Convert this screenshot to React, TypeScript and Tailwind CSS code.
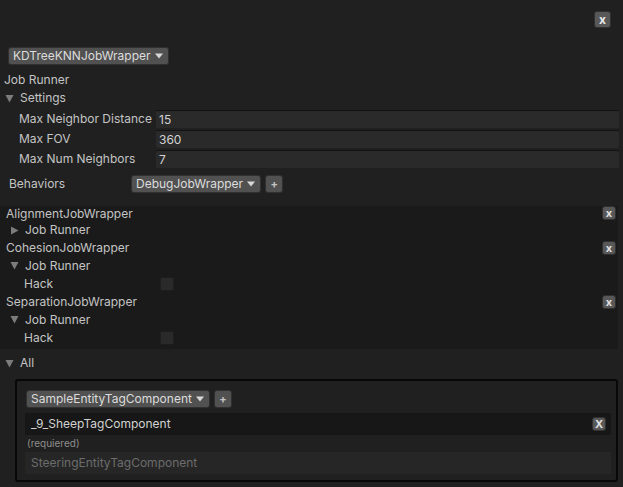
import type { ReactNode } from "react";

const font = { fontFamily: "Inter, 'Noto Sans', sans-serif" };

function Caret({ open }: { open: boolean }) {
  return (
    <svg width="9" height="9" viewBox="0 0 9 9" className="shrink-0">
      {open ? (
        <path d="M0.5 1 H8.5 L4.5 8.5 Z" fill="#7c7c7c" />
      ) : (
        <path d="M1 0.5 V8.5 L8.5 4.5 Z" fill="#7c7c7c" />
      )}
    </svg>
  );
}

function DropArrow() {
  return (
    <svg width="8" height="6" viewBox="0 0 8 6" className="shrink-0 ml-[4px]">
      <path d="M0 0.5 H8 L4 5.5 Z" fill="#d8d8d8" />
    </svg>
  );
}

function Dropdown({ label }: { label: string }) {
  return (
    <div className="h-[18px] flex items-center rounded-[3px] bg-[#515151] border border-[#303030] pl-[4px] pr-[5px] text-[12px] text-[#dcdcdc]">
      {label}
      <DropArrow />
    </div>
  );
}

function PlusButton() {
  return (
    <div className="w-[18px] h-[18px] flex items-center justify-center rounded-[3px] bg-[#515151] border border-[#303030] text-[11px] font-bold text-[#c4c4c4] leading-none">
      +
    </div>
  );
}

function XButton({ size = "sm", label = "x" }: { size?: "sm" | "lg"; label?: string }) {
  return (
    <div
      className={
        size === "lg"
          ? "w-[17px] h-[17px] flex items-center justify-center rounded-[3px] bg-[#585858] border border-[#303030] text-[12px] font-bold text-[#e8e8e8] leading-none"
          : "w-[14px] h-[14px] flex items-center justify-center rounded-[3px] bg-[#585858] border border-[#303030] text-[11px] font-bold text-[#e0e0e0] leading-none"
      }
    >
      {label}
    </div>
  );
}

function FieldRow({ label, value }: { label: string; value: string }) {
  return (
    <div className="h-[20px] flex items-center">
      <div className="w-[156px] pl-[19px] text-[12px] text-[#c4c4c4]">{label}</div>
      <div className="flex-1 h-[18px] mr-[4px] bg-[#2a2a2a] border-t border-[#121212] rounded-[2px] flex items-center pl-[3px] text-[12px] text-[#d2d2d2]">
        {value}
      </div>
    </div>
  );
}

function Row({ h, children }: { h: string; children: ReactNode }) {
  return <div className={`${h} flex items-center`}>{children}</div>;
}

function Hack() {
  return (
    <div className="h-[19px] flex items-center">
      <div className="w-[160px] pl-[24px] text-[12px] text-[#c4c4c4]">Hack</div>
      <div className="w-[14px] h-[14px] rounded-[2px] bg-[#2a2a2a] border border-[#1e1e1e]" />
    </div>
  );
}

export default function App() {
  return (
    <div style={font} className="w-[623px] h-[487px] bg-[#202020] overflow-hidden">
      <div className="flex justify-end pt-[11px] pr-[12px]">
        <XButton size="lg" />
      </div>

      <div className="flex pl-[8px] mt-[19px]">
        <Dropdown label="KDTreeKNNJobWrapper" />
      </div>

      <div className="h-[18px] mt-[6px] flex items-center pl-[4px] text-[12px] text-[#c4c4c4]">Job Runner</div>
      <div className="h-[18px] flex items-center gap-[6px] pl-[5px] text-[12px] text-[#c4c4c4]">
        <Caret open />
        Settings
      </div>

      <div className="mt-[2px]">
        <FieldRow label="Max Neighbor Distance" value="15" />
        <FieldRow label="Max FOV" value="360" />
        <FieldRow label="Max Num Neighbors" value="7" />
      </div>

      <div className="h-[18px] mt-[6px] flex items-center">
        <div className="w-[131px] pl-[9px] text-[12px] text-[#c4c4c4]">Behaviors</div>
        <Dropdown label="DebugJobWrapper" />
        <div className="ml-[4px]">
          <PlusButton />
        </div>
      </div>

      <div className="mt-[13px] w-[618px] h-[143px] bg-[#1a1a1a] text-[12px] text-[#c4c4c4]">
        <Row h="h-[15px]">
          <div className="flex-1 pl-[6px]">AlignmentJobWrapper</div>
          <div className="mr-[2px] self-start">
            <XButton />
          </div>
        </Row>
        <Row h="h-[18px]">
          <div className="flex items-center gap-[6px] pl-[10px]">
            <Caret open={false} />
            Job Runner
          </div>
        </Row>
        <Row h="h-[18px]">
          <div className="flex-1 pl-[6px]">CohesionJobWrapper</div>
          <div className="mr-[2px]">
            <XButton />
          </div>
        </Row>
        <Row h="h-[17px]">
          <div className="flex items-center gap-[6px] pl-[10px]">
            <Caret open />
            Job Runner
          </div>
        </Row>
        <Hack />
        <Row h="h-[18px]">
          <div className="flex-1 pl-[6px]">SeparationJobWrapper</div>
          <div className="mr-[2px]">
            <XButton />
          </div>
        </Row>
        <Row h="h-[17px]">
          <div className="flex items-center gap-[6px] pl-[10px]">
            <Caret open />
            Job Runner
          </div>
        </Row>
        <Hack />
      </div>

      <div className="h-[18px] mt-[5px] flex items-center gap-[6px] pl-[5px] text-[12px] text-[#c4c4c4]">
        <Caret open />
        All
      </div>

      <div className="mt-[7px] ml-[15px] w-[603px] h-[103px] border-2 border-[#080808] rounded-[3px] pt-[9px] pl-[8px] pr-[5px]">
        <div className="flex items-center gap-[4px] pl-[1px]">
          <Dropdown label="SampleEntityTagComponent" />
          <PlusButton />
        </div>
        <div className="mt-[5px] h-[22px] bg-[#171717] flex items-center justify-between pl-[6px] pr-[5px] text-[12px] text-[#d2d2d2]">
          _9_SheepTagComponent
          <XButton label="X" />
        </div>
        <div className="h-[17px] flex items-center pl-[2px] text-[10px] text-[#8e8e8e]">(requiered)</div>
        <div className="h-[22px] bg-[#262626] flex items-center pl-[6px] text-[12px] text-[#6c6c6c]">
          SteeringEntityTagComponent
        </div>
      </div>
    </div>
  );
}
